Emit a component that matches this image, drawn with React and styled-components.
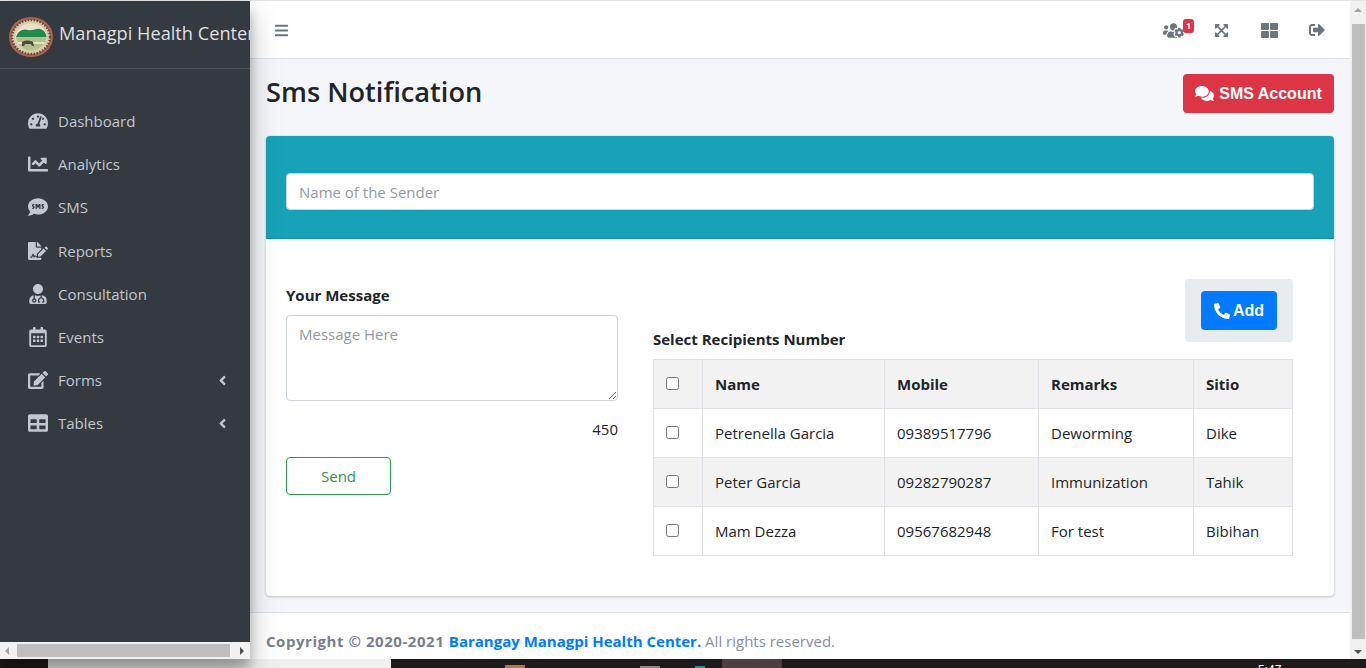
import React from 'react';
import styled, { createGlobalStyle } from 'styled-components';
import {
  FaTachometerAlt, FaChartLine, FaSms, FaFileSignature, FaUserMd, FaRegCalendarAlt, FaEdit, FaTable,
  FaAngleLeft, FaBars, FaUsersCog, FaExpandArrowsAlt, FaThLarge, FaSignOutAlt, FaComments, FaPhoneAlt,
} from 'react-icons/fa';

const GlobalStyle = createGlobalStyle`
  html, body { margin: 0; padding: 0; overflow: hidden; }
  * { box-sizing: border-box; }
  body { font-family: "Open Sans", "Noto Sans", sans-serif; font-size: 15px; line-height: 24px; color: #212529; }
`;

const Frame = styled.div`
  width: 1366px;
  height: 668px;
  display: flex;
  flex-direction: column;
  overflow: hidden;
`;
const Win = styled.div`
  flex: 1;
  min-height: 0;
  display: flex;
  border-top: 1px solid #e4e4e4;
`;

const Sidebar = styled.aside`
  width: 250px;
  flex: none;
  background: #343a40;
  display: flex;
  flex-direction: column;
  position: relative;
  z-index: 2;
  box-shadow: 0 14px 28px rgba(0, 0, 0, .25), 0 10px 10px rgba(0, 0, 0, .22);
`;
const Brand = styled.div`
  height: 68px;
  flex: none;
  display: flex;
  align-items: center;
  gap: 6px;
  padding: 0 0 4px 9px;
  border-bottom: 1px solid #4b545c;
  overflow: hidden;
  white-space: nowrap;
  font-size: 18.2px;
  color: rgba(255, 255, 255, .85);
`;
const Logo = styled.svg`
  width: 44px;
  height: 40px;
  flex: none;
  margin-top: 8px;
`;
const Nav = styled.nav`
  flex: 1;
  padding-top: 30.4px;
`;
const NavItem = styled.div`
  height: 43.2px;
  display: flex;
  align-items: center;
  padding: 0 20px 0 28px;
  color: #c2c7d0;
  font-size: 15px;
`;
const NavIcon = styled.span`
  width: 30px;
  flex: none;
  display: flex;
  font-size: 20px;
`;
const NavArrow = styled(FaAngleLeft)`
  margin-left: auto;
  font-size: 15px;
`;
const HScroll = styled.div`
  height: 17px;
  flex: none;
  background: #f1f1f1;
  display: flex;
  align-items: center;
  padding-left: 5px;
`;
const HThumb = styled.div`
  width: 213px;
  height: 13px;
  margin: 0 10px 0 8px;
  background: #bebebe;
`;
const ArrowSide = styled.span`
  width: 0;
  height: 0;
  border-top: 4px solid transparent;
  border-bottom: 4px solid transparent;
  border-${p => (p.$dir === 'left' ? 'right' : 'left')}: 4px solid ${p => (p.$dir === 'left' ? '#a3a3a3' : '#505050')};
`;

const Main = styled.main`
  flex: 1;
  min-width: 0;
  display: flex;
  flex-direction: column;
  background: #f4f6f9;
`;
const TopBar = styled.header`
  height: 58px;
  flex: none;
  background: #fff;
  border-bottom: 1px solid #dee2e6;
  display: flex;
  align-items: center;
  padding: 1px 9px 0 24px;
  color: #6c757d;
`;
const Burger = styled(FaBars)`
  font-size: 15px;
`;
const TopIcons = styled.div`
  margin-left: auto;
  display: flex;
  align-items: center;
`;
const TopIcon = styled.span`
  position: relative;
  width: 48px;
  display: flex;
  justify-content: center;
  font-size: ${p => p.$size || 17}px;
`;
const Badge = styled.span`
  position: absolute;
  top: -1px;
  right: 3px;
  width: 11px;
  height: 14px;
  border-radius: 3px;
  background: #dc3545;
  color: #fff;
  font-size: 9px;
  font-weight: 700;
  line-height: 14px;
  text-align: center;
`;

const Content = styled.div`
  flex: 1;
  min-height: 0;
  padding: 15px 16px 0;
`;
const Heading = styled.div`
  height: 39px;
  display: flex;
  align-items: center;
  justify-content: space-between;
  margin-bottom: 23px;
`;
const Title = styled.h1`
  margin: 0 0 3px;
  font-size: 27.2px;
  font-weight: 600;
  line-height: 36px;
`;
const AccountButton = styled.button`
  width: 151px;
  height: 39px;
  border: 0;
  border-radius: 4px;
  background: #dc3545;
  color: #fff;
  font: 700 16px "Liberation Sans", Arial, sans-serif;
  display: flex;
  align-items: center;
  justify-content: center;
  gap: 5px;
`;
const Card = styled.section`
  background: #fff;
  border-radius: 4px;
  box-shadow: 0 0 1px rgba(0, 0, 0, .13), 0 1px 3px rgba(0, 0, 0, .2);
`;
const CardHead = styled.div`
  height: 103px;
  background: #17a2b8;
  border-radius: 4px 4px 0 0;
  border-bottom: 1px solid #148ea1;
  padding: 37px 20px 0;
`;
const NameInput = styled.input`
  display: block;
  width: 100%;
  height: 37px;
  padding: 0 12px;
  border: 1px solid #ced4da;
  border-radius: 4px;
  font: inherit;
  color: #495057;
  &::placeholder { color: #939ba2; opacity: 1; }
`;
const CardBody = styled.div`
  display: grid;
  grid-template-columns: 332px 640px;
  column-gap: 35px;
  padding: 40px 41px 40px 20px;
`;
const LeftCol = styled.div`
  padding-top: 4px;
`;
const Label = styled.div`
  font-weight: 700;
  line-height: 24px;
`;
const MessageBox = styled.textarea`
  display: block;
  width: 100%;
  height: 86px;
  margin-top: 8px;
  padding: 6px 12px;
  border: 1px solid #ced4da;
  border-radius: 4px;
  font: inherit;
  &::placeholder { color: #939ba2; opacity: 1; }
`;
const Counter = styled.div`
  text-align: right;
  margin-top: 16px;
`;
const SendButton = styled.button`
  display: block;
  width: 105px;
  height: 38px;
  margin-top: 16px;
  background: #fff;
  border: 1px solid #2e9650;
  border-radius: 4px;
  color: #2e9650;
  font: inherit;
`;
const RightTop = styled.div`
  height: 72px;
  margin-bottom: 8px;
  display: flex;
  justify-content: space-between;
  align-items: flex-end;
`;
const AddBox = styled.div`
  align-self: flex-start;
  width: 108px;
  height: 63px;
  padding: 12px 16px;
  border-radius: 4px;
  background: #e9ecef;
`;
const AddButton = styled.button`
  width: 76px;
  height: 39px;
  border: 0;
  border-radius: 4px;
  background: #007bff;
  color: #fff;
  font: 700 16px "Liberation Sans", Arial, sans-serif;
  display: flex;
  align-items: center;
  justify-content: center;
  gap: 3px;
`;
const Table = styled.table`
  width: 639px;
  border-collapse: collapse;
  table-layout: fixed;
`;
const Th = styled.th`
  height: 49px;
  padding: 0 12px;
  border: 1px solid #dee2e6;
  text-align: left;
  font-weight: 700;
`;
const Td = styled.td`
  height: 49px;
  padding: 0 12px;
  border: 1px solid #dee2e6;
`;
const Row = styled.tr`
  background: ${p => (p.$shade ? '#f2f2f2' : '#fff')};
`;
const Check = styled.input.attrs({ type: 'checkbox' })`
  display: block;
  width: 13px;
  height: 13px;
  margin: 0 0 1px;
`;
const Footer = styled.footer`
  height: 47px;
  flex: none;
  background: #fff;
  border-top: 1px solid #dee2e6;
  padding: 16px 0 0 16px;
  color: #869099;
  white-space: nowrap;
`;
const Copyright = styled.b`
  color: #78818a;
  letter-spacing: .55px;
`;
const SiteName = styled.b`
  color: #007bff;
`;

const VScroll = styled.div`
  width: 16px;
  flex: none;
  background: #f1f1f1;
  display: flex;
  flex-direction: column;
  align-items: center;
  justify-content: space-between;
  padding: 7px 0 5px;
`;
const VThumb = styled.div`
  width: 13px;
  height: 615px;
  background: #bebebe;
`;
const ArrowUpDown = styled.span`
  width: 0;
  height: 0;
  border-left: 4px solid transparent;
  border-right: 4px solid transparent;
  border-${p => (p.$dir === 'up' ? 'bottom' : 'top')}: 4px solid ${p => (p.$dir === 'up' ? '#a3a3a3' : '#505050')};
`;

const Taskbar = styled.div`
  height: 9px;
  flex: none;
  background: #1e1a1c;
  display: flex;
  overflow: hidden;
`;
const TaskWindow = styled.div`
  width: 343px;
  margin-left: 48px;
  background: #f0f0f0;
`;
const TaskTile = styled.div`
  width: ${p => p.$w}px;
  margin-left: ${p => p.$gap}px;
  margin-top: ${p => p.$top || 0}px;
  background: ${p => p.$bg};
`;
const Clock = styled.div`
  margin-left: 476px;
  padding-top: 5px;
  color: #fff;
  font: 12px/12px "Liberation Sans", Arial, sans-serif;
`;

const menu = [
  { label: 'Dashboard', icon: <FaTachometerAlt /> },
  { label: 'Analytics', icon: <FaChartLine /> },
  { label: 'SMS', icon: <FaSms /> },
  { label: 'Reports', icon: <FaFileSignature /> },
  { label: 'Consultation', icon: <FaUserMd /> },
  { label: 'Events', icon: <FaRegCalendarAlt /> },
  { label: 'Forms', icon: <FaEdit />, arrow: true },
  { label: 'Tables', icon: <FaTable />, arrow: true },
];

const recipients = [
  ['Petrenella Garcia', '09389517796', 'Deworming', 'Dike'],
  ['Peter Garcia', '09282790287', 'Immunization', 'Tahik'],
  ['Mam Dezza', '09567682948', 'For test', 'Bibihan'],
];

const BrandLogo = () => (
  <Logo viewBox="0 0 44 40">
    <ellipse cx="22" cy="20" rx="22" ry="20" fill="#a8654f" />
    <ellipse cx="22" cy="20" rx="19" ry="17" fill="#d8cbb0" />
    <ellipse cx="22" cy="20" rx="19" ry="17" fill="none" stroke="#6b4a3a" strokeWidth="2.4" strokeDasharray="1.5 1.5" />
    <ellipse cx="22" cy="20" rx="15.5" ry="13.5" fill="#e9e4c8" />
    <path d="M7 20c2-6 7-9 12-7 5 1 9-2 12-1 4 1 6 4 6.500 8z" fill="#1f8a4c" />
    <path d="M7 20h30.500c-.5 7-7 13.500-15.500 13.500S7.500 27 7 20z" fill="#b5bf8c" />
    <path d="M9 25h26v2H9z" fill="#e6e2c4" />
    <path d="M13 25c3-2 8-2 11 0l1 4h-2l-1-2h-6l-1 2h-2z" fill="#4d4b46" />
  </Logo>
);

export default function App() {
  return (
    <Frame>
      <GlobalStyle />
      <Win>
        <Sidebar>
          <Brand><BrandLogo />Managpi Health Center</Brand>
          <Nav>
            {menu.map(item => (
              <NavItem key={item.label}>
                <NavIcon>{item.icon}</NavIcon>
                {item.label}
                {item.arrow && <NavArrow />}
              </NavItem>
            ))}
          </Nav>
          <HScroll>
            <ArrowSide $dir="left" />
            <HThumb />
            <ArrowSide $dir="right" />
          </HScroll>
        </Sidebar>
        <Main>
          <TopBar>
            <Burger />
            <TopIcons>
              <TopIcon $size={21}><FaUsersCog /><Badge>1</Badge></TopIcon>
              <TopIcon $size={15}><FaExpandArrowsAlt /></TopIcon>
              <TopIcon $size={17}><FaThLarge /></TopIcon>
              <TopIcon $size={16}><FaSignOutAlt /></TopIcon>
            </TopIcons>
          </TopBar>
          <Content>
            <Heading>
              <Title>Sms Notification</Title>
              <AccountButton><FaComments size={19} />SMS Account</AccountButton>
            </Heading>
            <Card>
              <CardHead>
                <NameInput placeholder="Name of the Sender" />
              </CardHead>
              <CardBody>
                <LeftCol>
                  <Label>Your Message</Label>
                  <MessageBox placeholder="Message Here" />
                  <Counter>450</Counter>
                  <SendButton>Send</SendButton>
                </LeftCol>
                <div>
                  <RightTop>
                    <Label>Select Recipients Number</Label>
                    <AddBox>
                      <AddButton><FaPhoneAlt size={16} />Add</AddButton>
                    </AddBox>
                  </RightTop>
                  <Table>
                    <colgroup>
                      <col width="49" />
                      <col width="182" />
                      <col width="154" />
                      <col width="155" />
                      <col width="99" />
                    </colgroup>
                    <thead>
                      <Row $shade>
                        <Th><Check /></Th>
                        <Th>Name</Th>
                        <Th>Mobile</Th>
                        <Th>Remarks</Th>
                        <Th>Sitio</Th>
                      </Row>
                    </thead>
                    <tbody>
                      {recipients.map((r, i) => (
                        <Row key={r[1]} $shade={i % 2 === 1}>
                          <Td><Check /></Td>
                          {r.map(v => <Td key={v}>{v}</Td>)}
                        </Row>
                      ))}
                    </tbody>
                  </Table>
                </div>
              </CardBody>
            </Card>
          </Content>
          <Footer>
            <Copyright>Copyright © 2020-2021 </Copyright>
            <SiteName>Barangay Managpi Health Center.</SiteName> All rights reserved.
          </Footer>
        </Main>
        <VScroll>
          <ArrowUpDown $dir="up" />
          <VThumb />
          <ArrowUpDown $dir="down" />
        </VScroll>
      </Win>
      <Taskbar>
        <TaskWindow />
        <TaskTile $w={20} $gap={114} $top={6} $bg="#b5793f" />
        <TaskTile $w={20} $gap={115} $top={7} $bg="#8a8a8a" />
        <TaskTile $w={10} $gap={35} $top={7} $bg="#2a8f94" />
        <TaskTile $w={60} $gap={17} $bg="#4a3f42" />
        <Clock>5:47</Clock>
      </Taskbar>
    </Frame>
  );
}
